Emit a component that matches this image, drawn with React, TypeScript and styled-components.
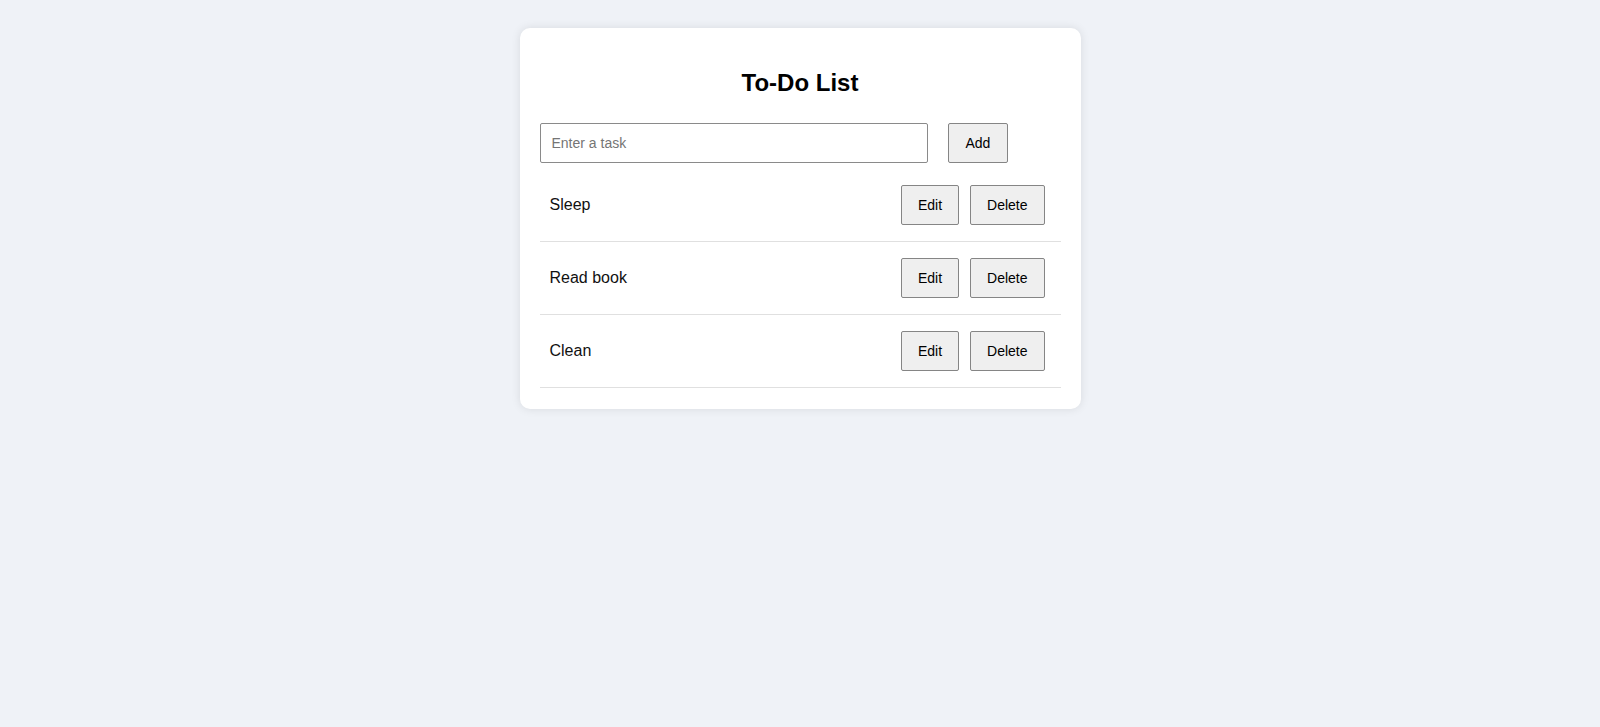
import React, { useState } from "react";
import styled, { createGlobalStyle } from "styled-components";

const GlobalStyle = createGlobalStyle`
  html, body {
    margin: 0;
    padding: 0;
  }
  body {
    background: #eff2f7;
    font-family: "Liberation Sans", Arial, sans-serif;
    color: #111;
  }
`;

const Page = styled.div`
  min-height: 727px;
  box-sizing: border-box;
  padding-top: 28px;
  display: flex;
  justify-content: center;
  align-items: flex-start;
`;

const Card = styled.div`
  width: 561px;
  box-sizing: border-box;
  background: #ffffff;
  border-radius: 10px;
  box-shadow: 0 0 10px rgba(0, 0, 0, 0.1);
  padding: 20px 20px 21px;
`;

const Title = styled.h2`
  margin: 21px 0 26px;
  text-align: center;
  font-size: 24px;
  font-weight: bold;
  line-height: normal;
  color: #000;
`;

const InputRow = styled.div`
  display: flex;
  align-items: center;
  gap: 20px;
  margin-bottom: 6px;
`;

const TaskInput = styled.input`
  width: 388px;
  height: 40px;
  box-sizing: border-box;
  padding: 0 11px;
  border: 1px solid #8a8a8a;
  border-radius: 2px;
  font-family: "Liberation Sans", Arial, sans-serif;
  font-size: 14px;
  color: #111;
  outline: none;
  &::placeholder {
    color: #757575;
  }
`;

const Button = styled.button<{ $wide?: boolean }>`
  height: 40px;
  box-sizing: border-box;
  padding: 0 ${(p) => (p.$wide ? "17px" : "16px")};
  background: #efefef;
  border: 1px solid #858585;
  border-radius: 2px;
  font-family: "Liberation Sans", Arial, sans-serif;
  font-size: 14px;
  color: #000;
  cursor: pointer;
`;

const List = styled.ul`
  list-style: none;
  margin: 0;
  padding: 0;
`;

const Item = styled.li`
  display: flex;
  align-items: center;
  justify-content: space-between;
  padding: 16px 16px 16px 10px;
  border-bottom: 1px solid #e0e0e0;
`;

const ItemText = styled.span`
  font-size: 16px;
  color: #111;
`;

const Actions = styled.div`
  display: flex;
  gap: 11px;
`;

export default function App() {
  const [tasks] = useState(["Sleep", "Read book", "Clean"]);
  return (
    <>
      <GlobalStyle />
      <Page>
        <Card>
          <Title>To-Do List</Title>
          <InputRow>
            <TaskInput placeholder="Enter a task" />
            <Button $wide>Add</Button>
          </InputRow>
          <List>
            {tasks.map((t) => (
              <Item key={t}>
                <ItemText>{t}</ItemText>
                <Actions>
                  <Button>Edit</Button>
                  <Button>Delete</Button>
                </Actions>
              </Item>
            ))}
          </List>
        </Card>
      </Page>
    </>
  );
}
